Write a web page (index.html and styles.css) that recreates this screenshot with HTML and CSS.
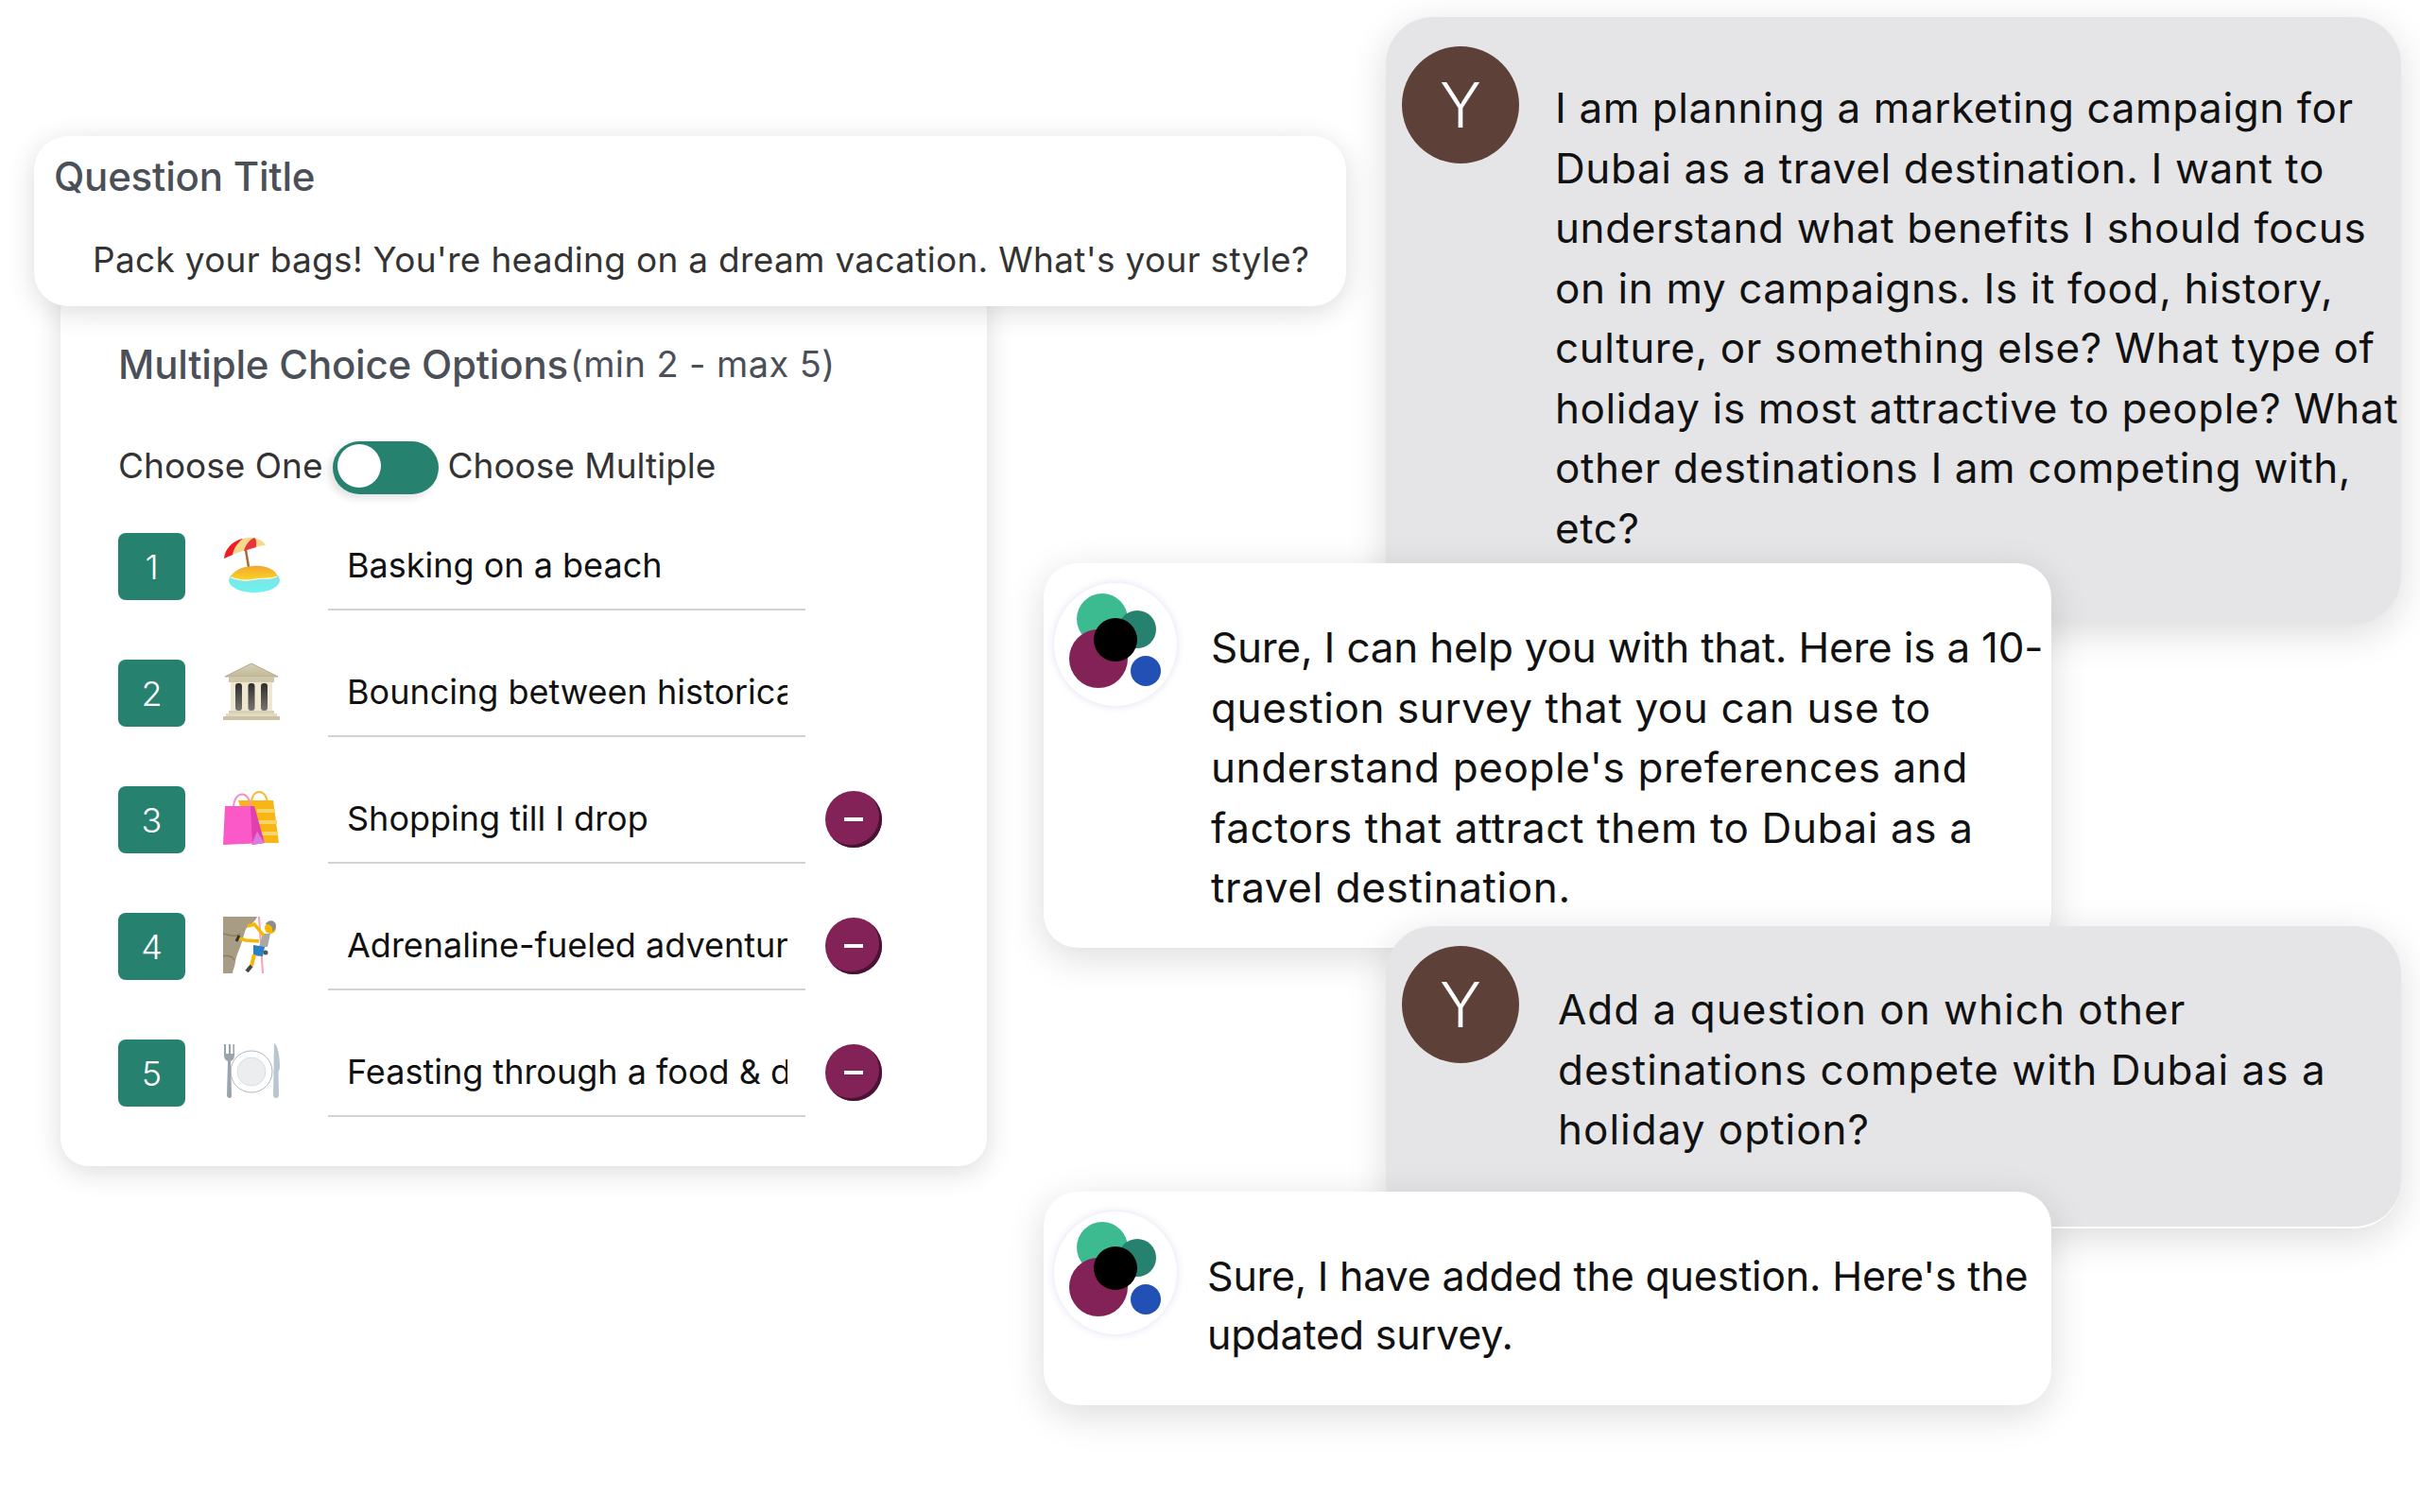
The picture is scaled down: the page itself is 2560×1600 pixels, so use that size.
FILE: index.html
```html
<!DOCTYPE html>
<html lang="en">
<head>
    <meta charset="UTF-8">
    <meta name="viewport" content="width=device-width, initial-scale=1.0">
    <title>Survey Builder</title>
    <link rel="stylesheet" href="styles.css">
</head>
<body>
    <svg class="svg-defs" width="0" height="0">
        <defs>
            <symbol id="logo" viewBox="0 0 130 130">
                <circle cx="65" cy="65" r="64" fill="#fff"/>
                <circle cx="51" cy="38" r="27" fill="#3dbb90"/>
                <circle cx="88" cy="49" r="20" fill="#26826f"/>
                <circle cx="47" cy="80" r="31" fill="#832257"/>
                <circle cx="65" cy="60" r="23" fill="#000"/>
                <circle cx="97" cy="93" r="16" fill="#2251b5"/>
            </symbol>
            <linearGradient id="sand" x1="0" y1="0" x2="0" y2="1">
                <stop offset="0" stop-color="#f3a531"/>
                <stop offset="1" stop-color="#fbd423"/>
            </linearGradient>
            <linearGradient id="sea" x1="0" y1="0" x2="0" y2="1">
                <stop offset="0" stop-color="#8fdcdc"/>
                <stop offset="1" stop-color="#6af3f0"/>
            </linearGradient>
            <linearGradient id="stone" x1="0" y1="0" x2="0" y2="1">
                <stop offset="0" stop-color="#d6ceb2"/>
                <stop offset="1" stop-color="#c4bb9c"/>
            </linearGradient>
            <linearGradient id="column" x1="0" y1="0" x2="0" y2="1">
                <stop offset="0" stop-color="#2f2d2c"/>
                <stop offset="1" stop-color="#77746e"/>
            </linearGradient>
        </defs>
    </svg>

    <div class="canvas">
        <div class="options-card">
            <div class="options-heading">
                <span class="options-title">Multiple Choice Options</span><span class="options-limit">(min 2 - max 5)</span>
            </div>
            <div class="toggle-row">
                <span>Choose One</span>
                <span class="toggle"><span class="toggle-knob"></span></span>
                <span>Choose Multiple</span>
            </div>

            <div class="option-row">
                <div class="option-num">1</div>
                <svg class="option-emoji" viewBox="0 0 60 60">
                    <path d="M24 14 L28 38" stroke="#a8693c" stroke-width="2.5"/>
                    <path d="M1 23 C2 11 14 2 26 1 C35 0 42 4 45 9 C36 10 18 15 1 23 Z" fill="#f6d98c"/>
                    <path d="M1 23 C2 12 11 4 21 2 C15 7 11 13 10 19 Z" fill="#ee1c25"/>
                    <path d="M22 15 C24 8 28 3 33 1 C36 3 35 8 35 11 Z" fill="#e8353a"/>
                    <ellipse cx="33" cy="46" rx="27" ry="13" fill="url(#sea)"/>
                    <path d="M8 43 C11 35 22 31 32 31 C44 30 57 35 57 42 C48 46 42 43 34 45 C25 47 16 46 8 43 Z" fill="url(#sand)"/>
                    <path d="M8 43 C16 46 25 47 34 45 C42 43 48 46 57 42" fill="none" stroke="#fff" stroke-width="1.2"/>
                </svg>
                <div class="option-input"><span class="option-text">Basking on a beach</span></div>
            </div>

            <div class="option-row">
                <div class="option-num">2</div>
                <svg class="option-emoji" viewBox="0 0 60 60">
                    <path d="M30 0 L58 14 L2 14 Z" fill="url(#stone)" stroke="#b3aa8c" stroke-width="1"/>
                    <rect x="6" y="14" width="48" height="6" fill="#cfc7aa"/>
                    <rect x="8" y="20" width="44" height="30" fill="#eee8d2"/>
                    <rect x="13" y="21" width="7" height="29" rx="3" fill="url(#column)"/>
                    <rect x="26.5" y="21" width="7" height="29" rx="3" fill="url(#column)"/>
                    <rect x="40" y="21" width="7" height="29" rx="3" fill="url(#column)"/>
                    <rect x="6" y="50" width="48" height="3" fill="#d8d0b4"/>
                    <rect x="3" y="53" width="54" height="3" fill="#e2dbc2"/>
                    <rect x="0" y="56" width="60" height="4" fill="#cbc2a4"/>
                </svg>
                <div class="option-input"><span class="option-text">Bouncing between historical sites</span></div>
            </div>

            <div class="option-row">
                <div class="option-num">3</div>
                <svg class="option-emoji" viewBox="0 0 60 60">
                    <path d="M30 14 C30 -2 46 -2 47 14" fill="none" stroke="#f7ba3e" stroke-width="2"/>
                    <path d="M16 11 L53 11 L59 56 L30 56 Z" fill="#f9b513"/>
                    <path d="M36 20 H55 V24 H36 Z M36 32 H57 V36 H36 Z M36 44 H58 V48 H36 Z" fill="#f3d56c"/>
                    <path d="M11 18 C12 0 28 0 29 18" fill="none" stroke="#f78fc8" stroke-width="2"/>
                    <path d="M2 17 L29 17 L43 56 L0 58 Z" fill="#fb59c8"/>
                    <path d="M29 17 L33 17 L44 56 L31 58 Z" fill="#e33eb0"/>
                    <path d="M30 58 L36 44 L44 56 Z" fill="#d97adf"/>
                </svg>
                <div class="option-input"><span class="option-text">Shopping till I drop</span></div>
                <div class="remove-btn"></div>
            </div>

            <div class="option-row">
                <div class="option-num">4</div>
                <svg class="option-emoji" viewBox="0 0 60 60">
                    <path d="M0 0 H36 C34 6 28 8 25 12 C22 16 22 22 20 26 C18 34 14 40 13 48 C12 54 10 58 10 60 H0 Z" fill="#a89c84"/>
                    <path d="M0 18 C8 20 14 22 18 18 M0 42 C4 40 10 42 12 46" fill="none" stroke="#8a7f6b" stroke-width="1.5"/>
                    <path d="M38 0 L42 60" stroke="#f6a3ac" stroke-width="2"/>
                    <circle cx="50" cy="12" r="6" fill="#f5b700"/>
                    <path d="M45 8 C47 3 55 3 56 9 C56 14 53 16 52 15 C53 10 49 8 45 8 Z" fill="#8d8d8d"/>
                    <path d="M42 18 L50 18 L47 32 L38 32 Z" fill="#a8a8a8"/>
                    <path d="M43 20 L33 8 L26 10" fill="none" stroke="#f5b700" stroke-width="3.5"/>
                    <path d="M38 26 L24 25 L17 23" fill="none" stroke="#f5b700" stroke-width="3.5"/>
                    <path d="M32 30 L44 32 L42 42 L32 41 Z" fill="#2c7fc2"/>
                    <path d="M33 40 L30 52" stroke="#f5b700" stroke-width="4"/>
                    <path d="M30 52 L25 58" stroke="#444" stroke-width="4"/>
                    <path d="M17 20 L14 26" stroke="#333" stroke-width="3"/>
                    <circle cx="45" cy="38" r="2.5" fill="#555"/>
                </svg>
                <div class="option-input"><span class="option-text">Adrenaline-fueled adventures</span></div>
                <div class="remove-btn"></div>
            </div>

            <div class="option-row">
                <div class="option-num">5</div>
                <svg class="option-emoji" viewBox="0 0 60 60">
                    <circle cx="30" cy="30" r="22" fill="#fff" stroke="#aeb7bc" stroke-width="1"/>
                    <circle cx="30" cy="30" r="15" fill="#ecedee" stroke="#cfe0ee" stroke-width="1"/>
                    <path d="M1 1 V12 C1 17 3 18 5 19 L4 55 C4 59 10 59 9 55 L8 19 C10 18 12 17 12 12 V1 H10.5 V11 H8 V1 H6 V11 H3 V1 Z" fill="#9aa5ab"/>
                    <path d="M54 0 C58 2 60 14 60 26 L58.5 31 L59 55 C59 59 53 59 53 55 Z" fill="#b7c6d0"/>
                </svg>
                <div class="option-input"><span class="option-text">Feasting through a food &amp; drink tour</span></div>
                <div class="remove-btn"></div>
            </div>
        </div>

        <div class="question-card">
            <div class="question-title">Question Title</div>
            <div class="question-text">Pack your bags! You're heading on a dream vacation. What's your style?</div>
        </div>

        <div class="bubble bubble-user bubble-one">
            <div class="user-avatar">Y</div>
            <p class="bubble-text">I am planning a marketing campaign for<br>Dubai as a travel destination. I want to<br>understand what benefits I should focus<br>on in my campaigns. Is it food, history,<br>culture, or something else? What type of<br>holiday is most attractive to people? What<br>other destinations I am competing with,<br>etc?</p>
        </div>

        <div class="bubble bubble-bot bubble-two">
            <svg class="bot-avatar"><use href="#logo"/></svg>
            <p class="bubble-text"><span class="tight-line">Sure, I can help you with that. Here is a 10-</span><br>question survey that you can use to<br>understand people's preferences and<br>factors that attract them to Dubai as a<br>travel destination.</p>
        </div>

        <div class="bubble bubble-user bubble-three">
            <div class="user-avatar">Y</div>
            <p class="bubble-text">Add a question on which other<br>destinations compete with Dubai as a<br>holiday option?</p>
        </div>

        <div class="bubble bubble-bot bubble-four">
            <svg class="bot-avatar"><use href="#logo"/></svg>
            <p class="bubble-text">Sure, I have added the question. Here's the<br>updated survey.</p>
        </div>
    </div>
</body>
</html>
```

FILE: styles.css
```css
body {
    margin: 0;
    background-color: white;
    color: #111;
    font-family: Inter, "Noto Sans", sans-serif;
}

.svg-defs {
    display: block;
    height: 0;
}

.canvas {
    position: relative;
    width: 2560px;
    height: 1600px;
    overflow: hidden;
}

/* left side: question + options */
.question-card {
    position: absolute;
    left: 36px;
    top: 144px;
    width: 1388px;
    height: 180px;
    box-sizing: border-box;
    padding: 18px 21px;
    background-color: white;
    border-radius: 36px;
    box-shadow: 0 6px 30px rgba(0, 0, 0, 0.14);
}

.question-title {
    font-size: 42px;
    font-weight: 500;
    line-height: 50px;
    letter-spacing: -0.2px;
    color: #4b5058;
}

.question-text {
    margin-top: 38px;
    margin-left: 41px;
    font-size: 37px;
    line-height: 50px;
    letter-spacing: 0.3px;
    white-space: nowrap;
    color: #333;
}

.options-card {
    position: absolute;
    left: 64px;
    top: 300px;
    width: 980px;
    height: 934px;
    box-sizing: border-box;
    padding: 55px 61px 0;
    background-color: white;
    border-radius: 30px;
    box-shadow: 0 6px 30px rgba(0, 0, 0, 0.14);
}

.options-heading {
    display: flex;
    align-items: center;
    height: 60px;
    white-space: nowrap;
}

.options-title {
    font-size: 42px;
    font-weight: 500;
    letter-spacing: -0.2px;
    color: #4b5058;
}

.options-limit {
    margin-left: 2px;
    font-size: 38px;
    letter-spacing: 0.4px;
    color: #4b5058;
}

.toggle-row {
    display: flex;
    align-items: center;
    gap: 10px;
    height: 56px;
    margin-top: 52px;
    font-size: 37px;
    line-height: 52px;
    color: #333;
}

.toggle-row span:first-child,
.toggle-row span:last-child {
    margin-top: -5px;
}

.toggle {
    display: flex;
    align-items: center;
    width: 112px;
    height: 56px;
    box-sizing: border-box;
    padding-left: 5px;
    background-color: #26826f;
    border-radius: 28px;
    box-shadow: -4px 4px 8px rgba(0, 0, 0, 0.12);
}

.toggle-knob {
    width: 46px;
    height: 46px;
    background-color: white;
    border-radius: 50%;
}

.option-row {
    display: flex;
    align-items: flex-start;
    height: 134px;
}

.toggle-row + .option-row {
    margin-top: 41px;
}

.option-num {
    display: flex;
    align-items: center;
    justify-content: center;
    flex-shrink: 0;
    width: 71px;
    height: 71px;
    background-color: #26826f;
    color: white;
    font-size: 36px;
    font-weight: 300;
    border-radius: 8px;
}

.option-emoji {
    flex-shrink: 0;
    width: 60px;
    height: 60px;
    margin: 4px 51px 0 40px;
    overflow: visible;
}

.option-input {
    display: flex;
    align-items: center;
    flex-shrink: 0;
    width: 505px;
    height: 82px;
    box-sizing: border-box;
    padding: 0 19px 12px 20px;
    border-bottom: 2px solid #d2d2d2;
}

.option-text {
    display: block;
    overflow: hidden;
    white-space: nowrap;
    font-size: 36px;
    line-height: 50px;
    color: #111;
}

.remove-btn {
    position: relative;
    flex-shrink: 0;
    width: 60px;
    height: 60px;
    margin: 5px 0 0 21px;
    background-color: #832257;
    border-radius: 50%;
    box-shadow: inset -3px -3px 0 #4a1333;
}

.remove-btn::after {
    content: "";
    position: absolute;
    left: 20px;
    top: 28px;
    width: 20px;
    height: 4px;
    background-color: white;
}

/* right side: chat bubbles */
.bubble {
    position: absolute;
    display: flex;
    align-items: flex-start;
    box-sizing: border-box;
    box-shadow: 0 10px 40px rgba(0, 0, 0, 0.14);
}

.bubble-user {
    left: 1466px;
    width: 1074px;
    padding: 31px 0 0 17px;
    background-color: #e5e5e7;
    border-radius: 50px;
}

.bubble-bot {
    left: 1104px;
    width: 1066px;
    padding: 21px 0 0 11px;
    background-color: white;
    border-radius: 36px;
}

.bubble-one {
    top: 18px;
    height: 642px;
    z-index: 1;
}

.bubble-two {
    top: 596px;
    height: 407px;
    z-index: 2;
}

.bubble-three {
    top: 980px;
    height: 320px;
    padding-top: 21px;
    border-bottom: 2px solid white;
    z-index: 3;
}

.bubble-four {
    top: 1261px;
    height: 226px;
    z-index: 4;
}

.user-avatar {
    display: flex;
    align-items: center;
    justify-content: center;
    flex-shrink: 0;
    width: 124px;
    height: 124px;
    background-color: #5d4037;
    color: white;
    font-size: 66px;
    font-weight: 300;
    border-radius: 50%;
}

.bot-avatar {
    flex-shrink: 0;
    width: 130px;
    height: 130px;
    border-radius: 50%;
    box-shadow: 0 0 8px rgba(90, 80, 190, 0.18);
}

.bubble-text {
    margin: 0;
    font-size: 44px;
    line-height: 63.5px;
    letter-spacing: 0.6px;
    white-space: nowrap;
    color: #111;
}

.tight-line {
    letter-spacing: -0.2px;
}

.bubble-one .bubble-text {
    margin: 34px 0 0 38px;
}

.bubble-two .bubble-text {
    margin: 37px 0 0 36px;
}

.bubble-three .bubble-text {
    margin: 36px 0 0 41px;
    letter-spacing: 1px;
}

.bubble-four .bubble-text {
    margin: 37px 0 0 32px;
    font-size: 43px;
    line-height: 62px;
    letter-spacing: -0.2px;
}
```
